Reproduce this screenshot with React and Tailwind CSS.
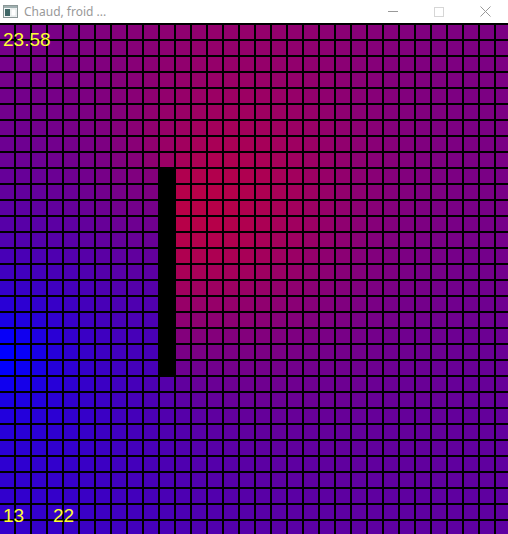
import React, { useMemo } from 'react';

// 32 x 32 cells of 16px; heat field = ambient + hot bump - cold dip,
// screened diffusion around an insulating wall
const N = 32;
const WALL_COL = 10;
const WALL_FROM = 9;
const WALL_TO = 21;
const COLD = { c: 0, r: 20, sigma: 0.8, decay: 24 };
const HOT = { c: 13, r: 11, sigma: 4, decay: 20 };

const isWall = (c, r) => c === WALL_COL && r >= WALL_FROM && r <= WALL_TO;
const idx = (c, r) => r * N + c;

function gaussian({ c: hc, r: hr, sigma }) {
  const S = new Float64Array(N * N);
  let total = 0;
  for (let r = 0; r < N; r++) {
    for (let c = 0; c < N; c++) {
      if (isWall(c, r)) continue;
      const v = Math.exp(-((c - hc) ** 2 + (r - hr) ** 2) / (2 * sigma * sigma));
      S[idx(c, r)] = v;
      total += v;
    }
  }
  for (let i = 0; i < S.length; i++) S[i] /= total;
  return S;
}

function relax(S, amb, decay) {
  const k = 1 / (decay * decay);
  const T = new Float64Array(N * N);
  const w = 1.85;
  for (let it = 0; it < 1400; it++) {
    for (let r = 0; r < N; r++) {
      for (let c = 0; c < N; c++) {
        if (isWall(c, r) || (c === COLD.c && r === COLD.r)) continue;
        let sum = 0;
        let n = 0;
        if (c > 0 && !isWall(c - 1, r)) { sum += T[idx(c - 1, r)]; n++; }
        if (c < N - 1 && !isWall(c + 1, r)) { sum += T[idx(c + 1, r)]; n++; }
        if (r > 0 && !isWall(c, r - 1)) { sum += T[idx(c, r - 1)]; n++; }
        if (r < N - 1 && !isWall(c, r + 1)) { sum += T[idx(c, r + 1)]; n++; }
        const i = idx(c, r);
        const next = (sum + (S ? S[i] : 0) + k * amb) / (n + k);
        T[i] += w * (next - T[i]);
      }
    }
  }
  return T;
}

const det3 = (m) =>
  m[0][0] * (m[1][1] * m[2][2] - m[1][2] * m[2][1]) -
  m[0][1] * (m[1][0] * m[2][2] - m[1][2] * m[2][0]) +
  m[0][2] * (m[1][0] * m[2][1] - m[1][1] * m[2][0]);

function solveField() {
  const base = relax(null, 1, COLD.decay);
  const hot = relax(gaussian(HOT), 0, HOT.decay);
  const cold = relax(gaussian(COLD), 0, COLD.decay);

  let hi = 0;
  for (let i = 0; i < hot.length; i++) if (hot[i] > hot[hi]) hi = i;

  // fit ambient, hot and cold strengths to three readings of the picture
  const probes = [
    [hi, 0.72],
    [idx(0, N - 1), 0.2],
    [idx(N - 1, N - 1), 0.37],
  ];
  const M = probes.map(([i]) => [base[i], hot[i], -cold[i]]);
  const y = probes.map(([, v]) => v);
  const D = det3(M);
  const [a, qh, qc] = [0, 1, 2].map((j) =>
    det3(M.map((row, r) => row.map((v, cIdx) => (cIdx === j ? y[r] : v)))) / D
  );

  return Array.from(base, (v, i) => Math.max(0, a * v + qh * hot[i] - qc * cold[i]));
}

function cellColor(t) {
  const k = Math.max(0, Math.min(1, t));
  return `rgb(${Math.round(255 * k)},0,${Math.round(255 * (1 - k))})`;
}

function TitleBar() {
  return (
    <div className="h-[23px] bg-white flex items-center relative">
      <svg width="15" height="13" viewBox="0 0 15 13" className="ml-[3px]">
        <rect x="0.5" y="0.5" width="14" height="12" fill="#f4f7f7" stroke="#8a9696" />
        <rect x="1" y="1" width="13" height="2" fill="#9fb0b0" />
        <rect x="2" y="4" width="5" height="7" fill="#3f6666" />
        <rect x="8" y="4" width="5" height="7" fill="#ffffff" stroke="#c5d0d0" strokeWidth="0.5" />
      </svg>
      <span className="ml-[6px] text-[12px] text-[#999999] font-['Noto_Sans',sans-serif] leading-none">
        Chaud, froid ...
      </span>
      <div className="ml-auto flex items-center h-full">
        <div className="w-[46px] h-full flex items-center justify-center">
          <div className="w-[10px] h-px bg-[#999999]" />
        </div>
        <div className="w-[46px] h-full flex items-center justify-center">
          <div className="w-[10px] h-[10px] border border-[#d6d6d6]" />
        </div>
        <div className="w-[46px] h-full flex items-center justify-center">
          <svg width="11" height="11" viewBox="0 0 11 11">
            <path d="M0.5 0.5 L10.5 10.5 M10.5 0.5 L0.5 10.5" stroke="#999999" strokeWidth="1" />
          </svg>
        </div>
      </div>
    </div>
  );
}

export default function App() {
  const field = useMemo(solveField, []);

  return (
    <div className="w-[508px] h-[534px] overflow-hidden bg-black">
      <TitleBar />
      <div className="relative h-[511px] overflow-hidden">
        <div className="-ml-[2px] grid grid-cols-[repeat(32,16px)] w-[512px]">
          {field.map((t, i) => {
            const c = i % N;
            const r = Math.floor(i / N);
            return (
              <div
                key={i}
                className="h-[16px] border-l-2 border-t-2 border-black"
                style={{ background: isWall(c, r) ? '#000' : cellColor(t) }}
              />
            );
          })}
        </div>
        <span className="absolute left-[3px] top-[7px] text-[19px] leading-none text-[#ffff33] font-['Liberation_Sans',Arial,sans-serif]">
          23.58
        </span>
        <span className="absolute left-[3px] top-[483px] text-[19px] leading-none text-[#ffff33] font-['Liberation_Sans',Arial,sans-serif]">
          13
        </span>
        <span className="absolute left-[53px] top-[483px] text-[19px] leading-none text-[#ffff33] font-['Liberation_Sans',Arial,sans-serif]">
          22
        </span>
      </div>
    </div>
  );
}
